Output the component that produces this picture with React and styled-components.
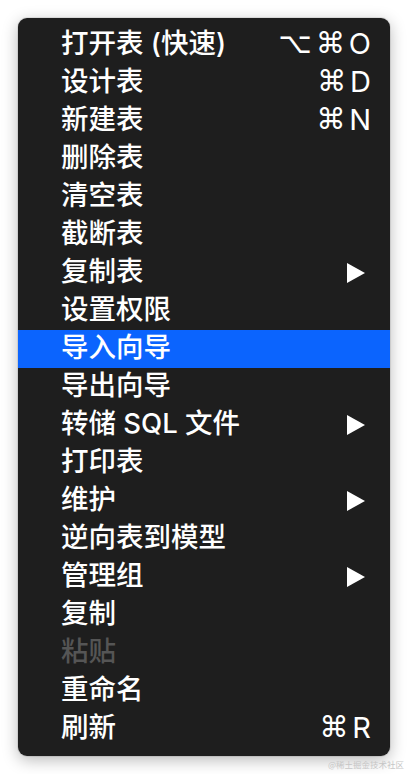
import React from 'react';
import styled, { createGlobalStyle } from 'styled-components';

const GlobalStyle = createGlobalStyle`
  html, body {
    margin: 0;
    padding: 0;
    background: #ffffff;
  }
  body {
    font-family: "Inter", "Noto Sans CJK SC", sans-serif;
  }
`;

const Page = styled.div`
  width: 408px;
  height: 774px;
  padding: 18px 18px 0 18px;
  box-sizing: border-box;
  position: relative;
  overflow: hidden;
`;

const Menu = styled.div`
  width: 372px;
  padding: 8px 0;
  box-sizing: border-box;
  background: #1e1e1e;
  border-radius: 9px;
  box-shadow: 0 4px 16px rgba(0, 0, 0, 0.28), 0 0 0 1px rgba(0, 0, 0, 0.08);
  display: flex;
  flex-direction: column;
`;

const Item = styled.div`
  height: 38px;
  display: flex;
  align-items: center;
  padding: 0 19px 0 43px;
  background: ${p => (p.active ? '#0b64fe' : 'transparent')};
  color: ${p => (p.disabled ? '#555555' : '#ffffff')};
  font-size: 27.5px;
  font-weight: 500;
  line-height: 1;
`;

const Label = styled.span`
  flex: 1;
  white-space: nowrap;
  margin-top: -3px;
`;

const Shortcut = styled.span`
  display: flex;
  align-items: center;
  gap: 4px;
  margin-top: -3px;
`;

const Sym = styled.span`
  font-family: "DejaVu Sans", sans-serif;
  font-size: 29px;
  font-weight: 400;
`;

const Key = styled.span`
  font-family: "Inter", sans-serif;
  font-size: 29px;
  font-weight: 400;
`;

const Arrow = styled.svg`
  width: 18px;
  height: 20px;
  margin-right: 6px;
`;

const Watermark = styled.div`
  position: absolute;
  right: 4px;
  bottom: 4px;
  font-family: "Noto Sans CJK SC", serif;
  font-size: 8.5px;
  color: #c6c6c6;
`;

const items = [
  { label: '打开表 (快速)', keys: ['⌥', '⌘'], key: 'O' },
  { label: '设计表', keys: ['⌘'], key: 'D' },
  { label: '新建表', keys: ['⌘'], key: 'N' },
  { label: '删除表' },
  { label: '清空表' },
  { label: '截断表' },
  { label: '复制表', sub: true },
  { label: '设置权限' },
  { label: '导入向导', active: true },
  { label: '导出向导' },
  { label: '转储 SQL 文件', sub: true },
  { label: '打印表' },
  { label: '维护', sub: true },
  { label: '逆向表到模型' },
  { label: '管理组', sub: true },
  { label: '复制' },
  { label: '粘贴', disabled: true },
  { label: '重命名' },
  { label: '刷新', keys: ['⌘'], key: 'R' },
];

const App = () => (
  <>
    <GlobalStyle />
    <Page>
      <Menu>
        {items.map(item => (
          <Item key={item.label} active={item.active} disabled={item.disabled}>
            <Label>{item.label}</Label>
            {item.key && (
              <Shortcut>
                {item.keys.map(s => (
                  <Sym key={s}>{s}</Sym>
                ))}
                <Key>{item.key}</Key>
              </Shortcut>
            )}
            {item.sub && (
              <Arrow viewBox="0 0 18 20">
                <polygon points="0,0 18,10 0,20" fill="#ffffff" />
              </Arrow>
            )}
          </Item>
        ))}
      </Menu>
      <Watermark>@稀土掘金技术社区</Watermark>
    </Page>
  </>
);

export default App;
